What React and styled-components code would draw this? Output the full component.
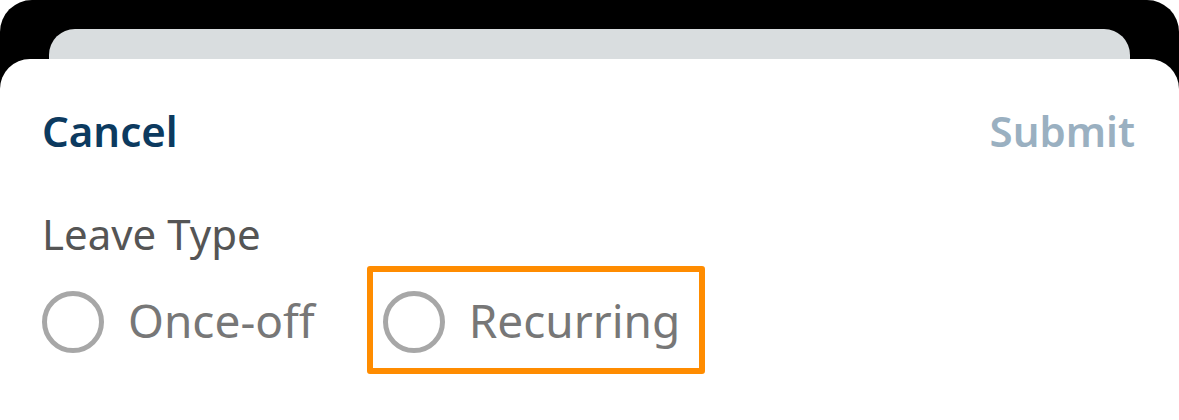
import React from 'react'
import styled, { createGlobalStyle } from 'styled-components'

const GlobalStyle = createGlobalStyle`
  html, body {
    margin: 0;
    padding: 0;
    background: #ffffff;
  }
  body {
    font-family: "Noto Sans", "Open Sans", sans-serif;
  }
`

const Screen = styled.div`
  display: flex;
  flex-direction: column;
  height: 420px;
  padding-top: 29px;
  box-sizing: border-box;
  background: #000;
  border-radius: 32px 32px 0 0;
  overflow: hidden;
`

const BackCard = styled.div`
  height: 30px;
  margin: 0 49px;
  background: #d9dddf;
  border-radius: 26px 26px 0 0;
`

const Sheet = styled.div`
  flex: 1;
  display: flex;
  flex-direction: column;
  background: #fff;
  border-radius: 30px 30px 0 0;
  padding: 43px 44px 0 42px;
`

const Header = styled.div`
  display: flex;
  justify-content: space-between;
  align-items: center;
`

const HeaderButton = styled.span`
  font-size: 42px;
  font-weight: 600;
  line-height: 58px;
  color: ${p => (p.disabled ? '#9ab0c1' : '#0c3a5f')};
`

const FieldLabel = styled.div`
  margin-top: 47px;
  font-size: 42px;
  line-height: 54px;
  color: #555;
`

const RadioGroup = styled.div`
  display: flex;
  align-items: center;
  gap: 52px;
  margin-top: 5px;
`

const RadioOption = styled.label`
  display: flex;
  align-items: center;
  gap: 24px;
  height: 96px;
  padding: ${p => (p.highlighted ? '0 19px 0 10px' : '0')};
  border: ${p => (p.highlighted ? '6px solid #ff8c00' : 'none')};
  border-radius: 3px;
`

const RadioCircle = styled.span`
  width: 62px;
  height: 62px;
  box-sizing: border-box;
  border: 5px solid #a7a7a7;
  border-radius: 50%;
  margin-top: 4px;
`

const RadioText = styled.span`
  font-size: 46px;
  line-height: 60px;
  color: #777;
`

const options = [
  { label: 'Once-off' },
  { label: 'Recurring', highlighted: true },
]

const App = () => {
  return (
    <>
      <GlobalStyle />
      <Screen>
        <BackCard />
        <Sheet>
          <Header>
            <HeaderButton>Cancel</HeaderButton>
            <HeaderButton disabled>Submit</HeaderButton>
          </Header>
          <FieldLabel>Leave Type</FieldLabel>
          <RadioGroup>
            {options.map(o => (
              <RadioOption key={o.label} highlighted={o.highlighted}>
                <RadioCircle />
                <RadioText>{o.label}</RadioText>
              </RadioOption>
            ))}
          </RadioGroup>
        </Sheet>
      </Screen>
    </>
  )
}

export default App
